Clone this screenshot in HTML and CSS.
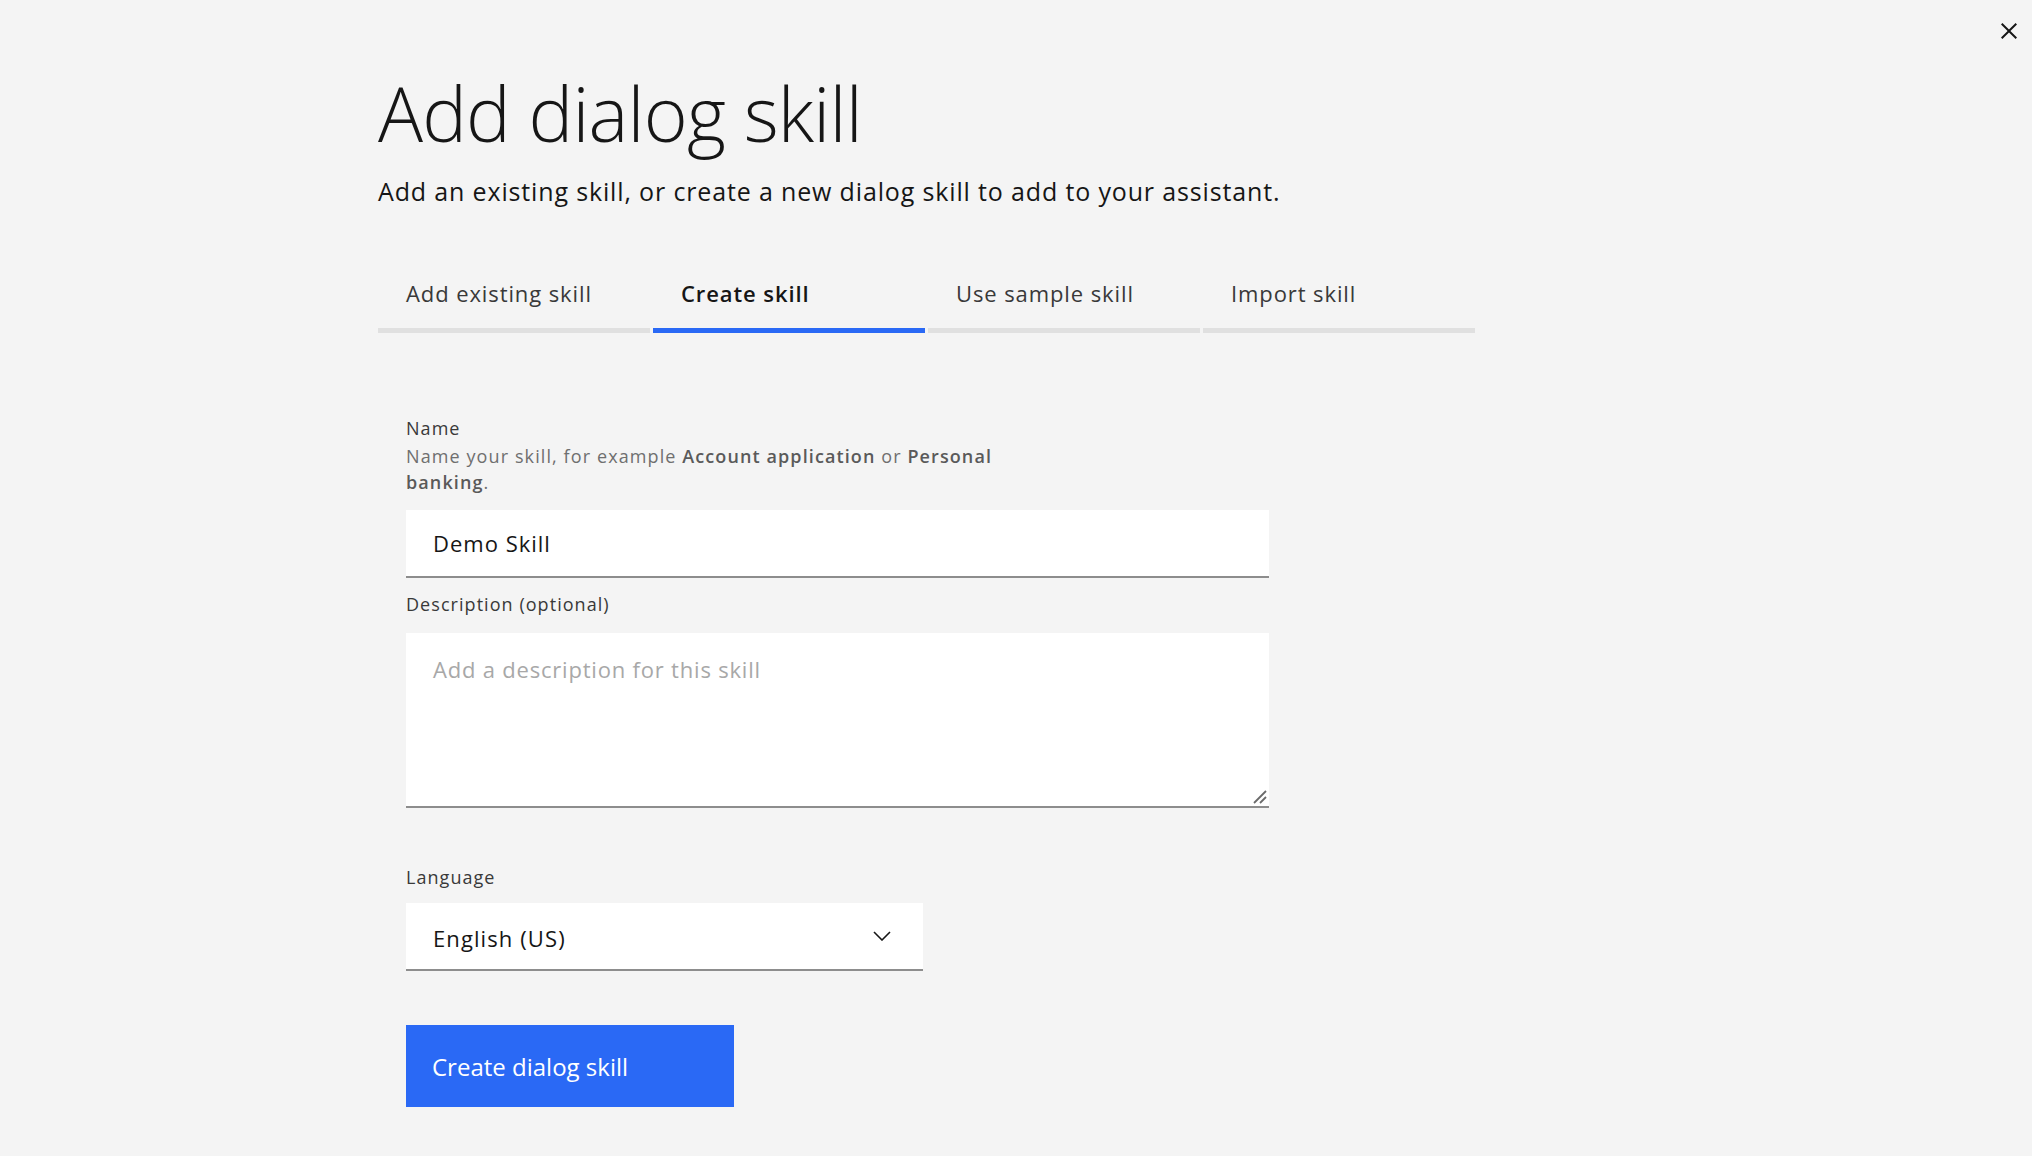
FILE: index.html
```
<!DOCTYPE html>
<html lang="en">
<head>
<meta charset="utf-8">
<title>Add dialog skill</title>
<link rel="stylesheet" href="styles.css">
</head>
<body>
<div class="modal">
  <button class="close" aria-label="Close">
    <svg width="32" height="32" viewBox="0 0 32 32"><path d="M24 9.4L22.6 8 16 14.6 9.4 8 8 9.4 14.6 16 8 22.6 9.4 24 16 17.4 22.6 24 24 22.6 17.4 16 24 9.4z" fill="#161616"/></svg>
  </button>
  <h1 class="title">Add dialog skill</h1>
  <p class="subtitle">Add an existing skill, or create a new dialog skill to add to your assistant.</p>
  <div class="tabs">
    <div class="tab">Add existing skill</div>
    <div class="tab active">Create skill</div>
    <div class="tab">Use sample skill</div>
    <div class="tab">Import skill</div>
  </div>
  <form class="form">
    <label class="label" for="name">Name</label>
    <div class="helper">Name your skill, for example <b>Account application</b> or <b>Personal</b> <b>banking</b>.</div>
    <input class="input" id="name" type="text" value="Demo Skill">
    <label class="label label-desc" for="desc">Description (optional)</label>
    <div class="textarea-wrap">
      <textarea class="textarea" id="desc" placeholder="Add a description for this skill"></textarea>
      <svg class="resizer" width="14" height="14" viewBox="0 0 14 14"><line x1="1" y1="13" x2="13" y2="1" stroke="#6a6a6a" stroke-width="1.8"/><line x1="7" y1="13" x2="13" y2="7" stroke="#6a6a6a" stroke-width="1.8"/></svg>
    </div>
    <label class="label label-lang">Language</label>
    <div class="select">
      <span class="select-value">English (US)</span>
      <svg class="chevron" width="18" height="10" viewBox="0 0 18 10"><polyline points="1,1 9,9 17,1" fill="none" stroke="#161616" stroke-width="1.6"/></svg>
    </div>
    <button class="primary" type="button">Create dialog skill</button>
  </form>
</div>
</body>
</html>
```
FILE: styles.css
```
* { box-sizing: border-box; }
html, body { margin: 0; padding: 0; }
body {
  background: #f4f4f4;
  font-family: "Open Sans", "Liberation Sans", sans-serif;
  color: #161616;
}
.modal {
  position: relative;
  min-height: 1156px;
  padding: 68px 0 0 378px;
}
.close {
  position: absolute;
  top: 15px;
  right: 7px;
  width: 32px;
  height: 32px;
  padding: 0;
  border: 0;
  background: transparent;
  display: flex;
}
.title {
  margin: 0;
  font-size: 75px;
  font-weight: 300;
  line-height: 90px;
  letter-spacing: -0.8px;
}
.subtitle {
  margin: 17px 0 0;
  font-size: 25px;
  line-height: 32px;
  letter-spacing: 0.85px;
}
.tabs {
  display: flex;
  gap: 3px;
  margin-top: 51px;
}
.tab {
  width: 272px;
  padding: 20px 0 20px 28px;
  border-bottom: 5px solid #e0e0e0;
  font-size: 22px;
  line-height: 30px;
  letter-spacing: 0.9px;
  color: #393939;
}
.tab.active {
  border-bottom-color: #2a69f5;
  color: #161616;
  font-weight: 600;
}
.form {
  margin: 83px 0 0 28px;
  display: flex;
  flex-direction: column;
  align-items: flex-start;
}
.label {
  display: block;
  font-size: 18px;
  line-height: 24px;
  letter-spacing: 1.05px;
  color: #393939;
}
.helper {
  margin-top: 3px;
  max-width: 610px;
  font-size: 18px;
  line-height: 26px;
  letter-spacing: 1.1px;
  color: #6f6f6f;
}
.helper b {
  font-weight: 600;
  color: #5a5a5a;
}
.input {
  margin-top: 15px;
  width: 863px;
  height: 68px;
  border: 0;
  border-bottom: 2px solid #8d8d8d;
  background: #fff;
  padding: 0 27px;
  font-family: inherit;
  font-size: 22px;
  letter-spacing: 1px;
  color: #161616;
  outline: none;
}
.label-desc { margin-top: 14px; }
.textarea-wrap {
  position: relative;
  margin-top: 17px;
  width: 863px;
  height: 175px;
}
.textarea {
  display: block;
  width: 100%;
  height: 100%;
  border: 0;
  border-bottom: 2px solid #8d8d8d;
  background: #fff;
  padding: 22px 27px;
  font-family: inherit;
  font-size: 22px;
  line-height: 28px;
  letter-spacing: 0.8px;
  color: #161616;
  resize: none;
  outline: none;
}
.textarea::placeholder { color: #a8a8a8; }
.resizer {
  position: absolute;
  right: 2px;
  bottom: 4px;
}
.label-lang { margin-top: 57px; }
.select {
  margin-top: 14px;
  width: 517px;
  height: 68px;
  background: #fff;
  border-bottom: 2px solid #8d8d8d;
  padding: 0 32px 0 27px;
  display: flex;
  align-items: center;
  justify-content: space-between;
}
.select-value {
  padding-top: 3px;
  font-size: 22px;
  line-height: 28px;
  letter-spacing: 1.1px;
  color: #161616;
}
.chevron { display: block; }
.primary {
  margin-top: 54px;
  width: 328px;
  height: 82px;
  border: 0;
  background: #2a69f5;
  color: #fff;
  font-family: inherit;
  font-size: 24px;
  text-align: left;
  padding: 0 0 0 26px;
}
```
